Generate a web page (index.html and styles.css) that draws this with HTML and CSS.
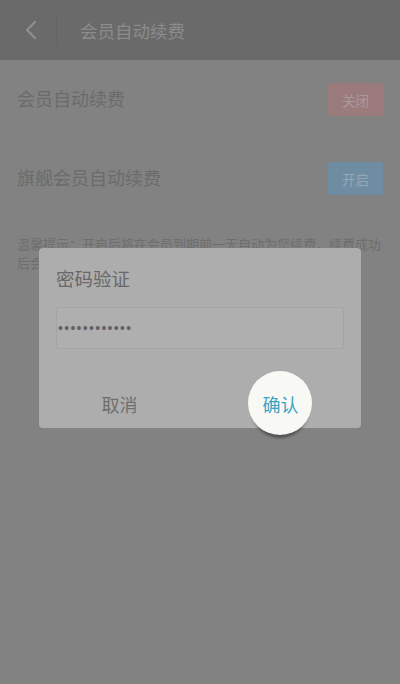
FILE: index.html
```html
<!DOCTYPE html>
<html lang="zh">
<head>
    <meta charset="UTF-8">
    <meta name="viewport" content="width=device-width, initial-scale=1.0">
    <title>会员自动续费</title>
    <link rel="stylesheet" href="styles.css">
</head>
<body>

    <div class="app-bar">
        <div class="back">
            <svg width="14" height="20" viewBox="0 0 14 20">
                <path d="M11 2 L3 10 L11 18" fill="none" stroke="#8e8e8e" stroke-width="2.4" stroke-linecap="round" stroke-linejoin="round"/>
            </svg>
        </div>
        <div class="title">会员自动续费</div>
    </div>

    <div class="settings">
        <div class="row row-first">
            <span>会员自动续费</span>
            <button class="switch off">关闭</button>
        </div>
        <div class="row row-second">
            <span>旗舰会员自动续费</span>
            <button class="switch on">开启</button>
        </div>
        <p class="desc">温馨提示：开启后将在会员到期前一天自动为您续费，续费成功后会通知您，如需取消可随时关闭。</p>
    </div>

    <div class="mask">
        <div class="dialog">
            <div class="dialog-title">密码验证</div>
            <div class="pwd-box">
                <span class="pwd-dots">••••••••••••</span>
            </div>
            <div class="actions">
                <button class="act cancel">取消</button>
                <button class="act confirm"><span>确认</span></button>
            </div>
        </div>
    </div>

</body>
</html>
```

FILE: styles.css
```css
body {
    margin: 0;
    background-color: #828282;
    font-family: "Noto Sans CJK SC", "Noto Sans", sans-serif;
    color: #6b6b6b;
}

button {
    font-family: inherit;
    border: none;
    padding: 0;
    cursor: pointer;
}

.app-bar {
    height: 60px;
    background-color: #6a6a6a;
    display: flex;
    align-items: center;
}

    .app-bar .back {
        width: 32px;
        height: 30px;
        padding-left: 24px;
        display: flex;
        align-items: center;
        border-right: 1px solid #646464;
    }

    .app-bar .title {
        margin-left: 23px;
        font-size: 17.5px;
        color: #8c8c8c;
    }

.settings {
    padding: 0 17px;
}

.row {
    display: flex;
    justify-content: space-between;
    align-items: center;
    height: 33px;
    font-size: 18px;
}

    .row span {
        margin-top: -3px;
    }

.row-first {
    margin-top: 23px;
}

.row-second {
    margin-top: 46px;
}

.switch {
    width: 55px;
    height: 33px;
    border-radius: 3px;
    font-size: 13.5px;
}

    .switch.off {
        background-color: #9a7a7b;
        color: #ab9a9b;
    }

    .switch.on {
        background-color: #6f8da2;
        color: #93a7b5;
    }

.desc {
    margin: 39px 0 0;
    font-size: 13px;
    line-height: 19px;
    color: #6e6e6e;
}

/* dialog layer */
.mask {
    position: fixed;
    top: 0;
    left: 0;
    right: 0;
    bottom: 0;
    display: flex;
    justify-content: center;
    align-items: flex-start;
    padding-top: 248px;
}

.dialog {
    width: 322px;
    background-color: #adadad;
    border-radius: 4px;
}

.dialog-title {
    margin: 17px 17px 0;
    font-size: 18.5px;
    line-height: 26px;
    color: #686868;
}

.pwd-box {
    margin: 16px 17px 0;
    height: 42px;
    box-sizing: border-box;
    border: 1px solid #a4a4a4;
    border-radius: 3px;
    background-color: #afafaf;
    display: flex;
    align-items: center;
    padding-left: 1px;
}

.pwd-dots {
    font-family: "Liberation Sans", sans-serif;
    font-size: 14px;
    letter-spacing: 1.3px;
    color: #626262;
}

.actions {
    margin-top: 31px;
    height: 48px;
    display: grid;
    grid-template-columns: 1fr 1fr;
}

.act {
    background: none;
    font-size: 18px;
}

    .act.cancel {
        color: #6f6f6f;
    }

    .act.confirm {
        position: relative;
        z-index: 0;
        color: #3ba3c3;
    }

        /* highlight ring around the confirm button */
        .act.confirm::before {
            content: '';
            position: absolute;
            left: 50%;
            top: 50%;
            width: 64px;
            height: 64px;
            margin: -33px 0 0 -33px;
            border-radius: 50%;
            background-color: #f8f8f4;
            box-shadow: 0 7px 3px -4px rgba(0, 0, 0, 0.4);
            z-index: -1;
        }
```
